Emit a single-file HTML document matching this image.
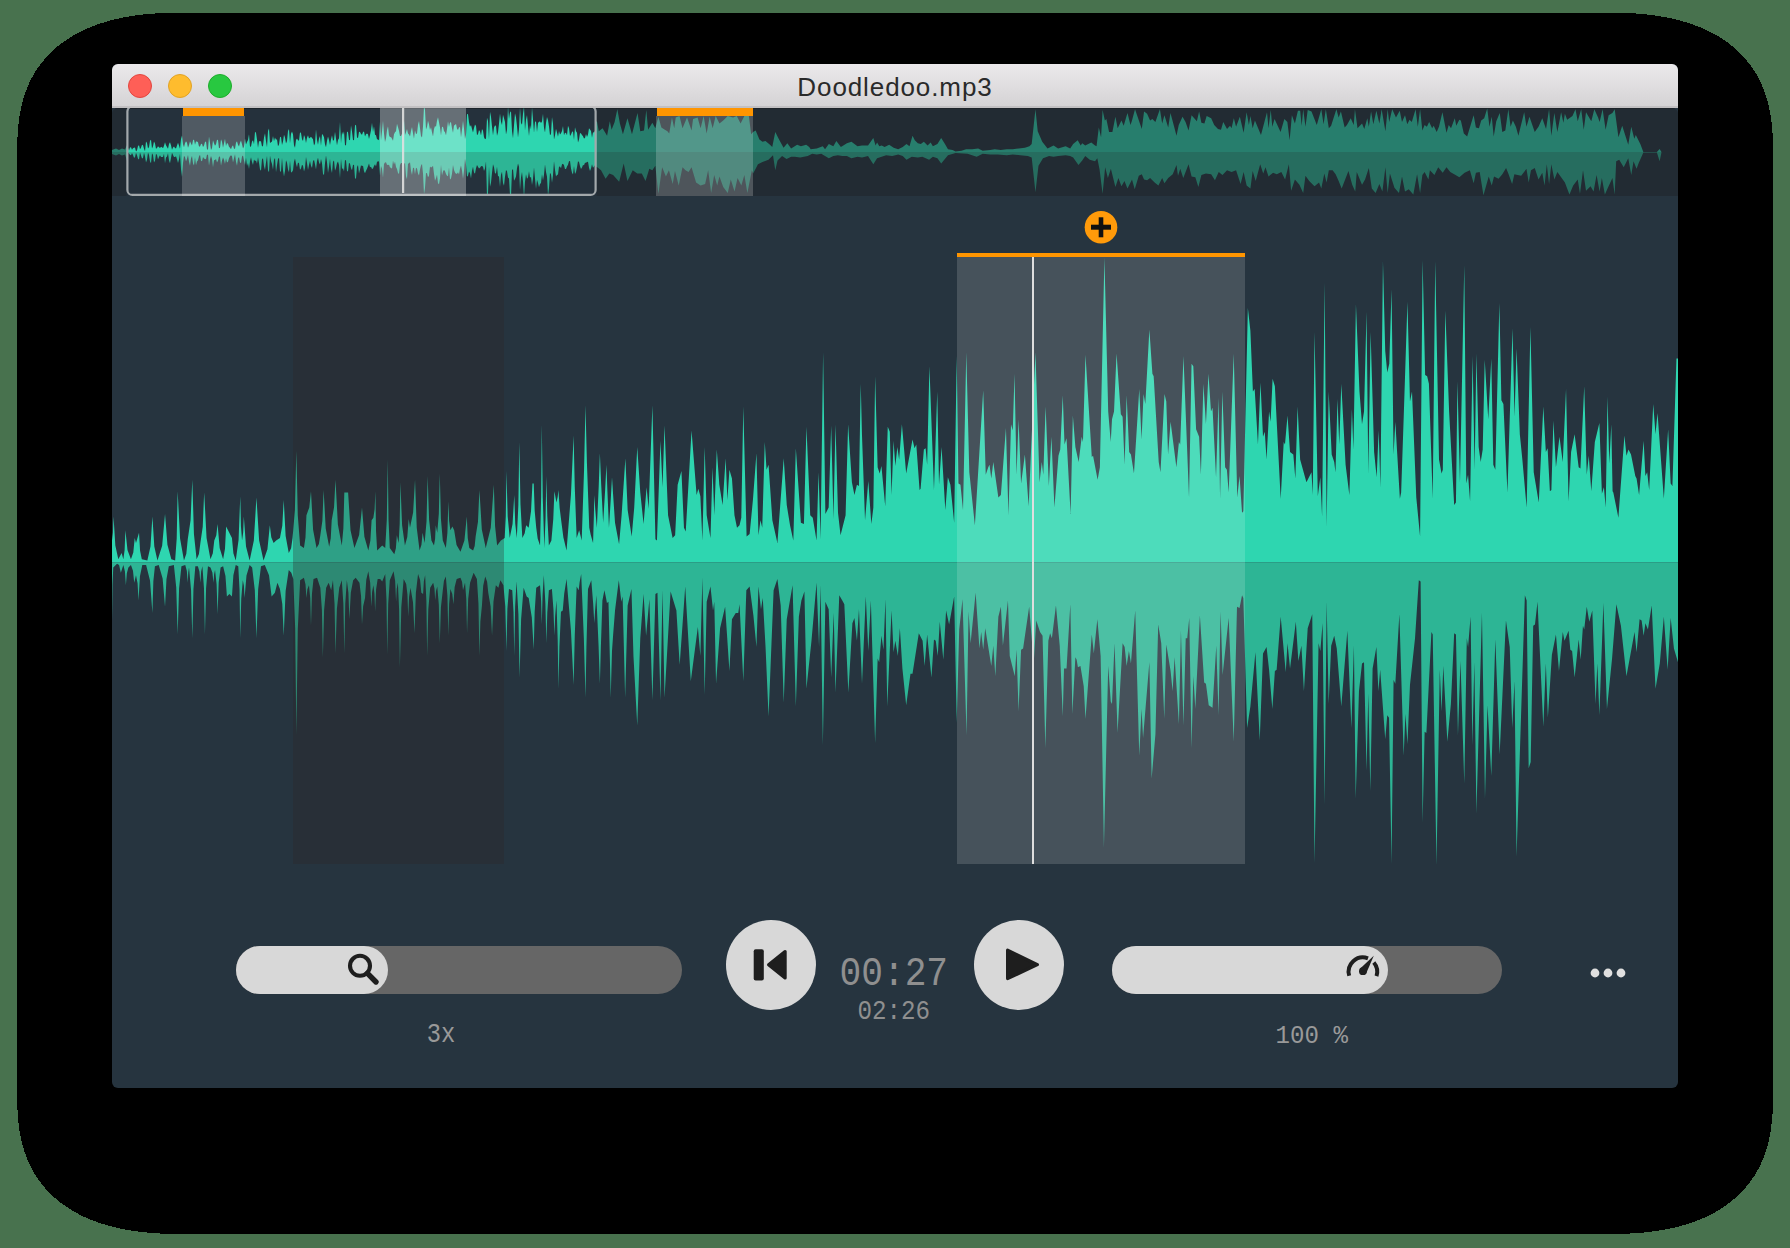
<!DOCTYPE html>
<html><head><meta charset="utf-8">
<style>
html,body{margin:0;padding:0;}
body{width:1790px;height:1248px;overflow:hidden;background:#48724e;position:relative;font-family:"Liberation Sans",sans-serif;}
.shadow{position:absolute;left:17px;top:13px;width:1756px;height:1221px;background:#000;border-radius:175px/108px;}
.win{position:absolute;left:112px;top:64px;width:1566px;height:1024px;border-radius:6px;overflow:hidden;background:#26343f;}
.title{position:absolute;left:0;top:0;width:1566px;height:44px;background:linear-gradient(#ebe9eb,#d4d2d4);box-shadow:inset 0 -2px 0 #c2c0c2;}
.title .t{position:absolute;left:0;width:100%;top:8px;text-align:center;font-size:26px;letter-spacing:0.9px;color:#2a2a2a;}
.tl{position:absolute;top:10px;width:24px;height:24px;border-radius:50%;box-sizing:border-box;}
svg{position:absolute;left:0;top:0;}
.mono{font-family:"Liberation Mono",monospace;position:absolute;white-space:pre;}
</style></head><body>
<svg width="1790" height="1248" viewBox="0 0 1790 1248" style="position:absolute;left:0;top:0"><path d="M17.2,154.0 L17.2,145.6 L17.4,139.6 L17.6,134.3 L17.9,129.4 L18.4,124.8 L18.9,120.4 L19.5,116.2 L20.2,112.1 L21.0,108.2 L21.8,104.4 L22.8,100.7 L23.9,97.1 L25.0,93.6 L26.3,90.1 L27.6,86.8 L29.0,83.5 L30.5,80.4 L32.1,77.3 L33.8,74.3 L35.6,71.3 L37.5,68.5 L39.5,65.7 L41.5,62.9 L43.7,60.3 L45.9,57.7 L48.2,55.2 L50.6,52.7 L53.1,50.4 L55.7,48.1 L58.3,45.8 L61.1,43.7 L63.9,41.6 L66.9,39.6 L69.9,37.6 L73.0,35.7 L76.2,33.9 L79.4,32.2 L82.8,30.5 L86.2,28.9 L89.8,27.4 L93.4,26.0 L97.1,24.6 L101.0,23.3 L104.9,22.1 L108.9,20.9 L113.0,19.8 L117.2,18.8 L121.5,17.9 L126.0,17.0 L130.6,16.3 L135.3,15.5 L140.1,14.9 L145.1,14.3 L150.4,13.9 L155.8,13.4 L161.5,13.1 L167.5,12.8 L174.1,12.7 L181.4,12.5 L191.8,12.5 L1598.4,12.5 L1608.8,12.5 L1616.1,12.7 L1622.7,12.8 L1628.7,13.1 L1634.4,13.4 L1639.8,13.9 L1645.1,14.3 L1650.1,14.9 L1654.9,15.5 L1659.6,16.3 L1664.2,17.0 L1668.7,17.9 L1673.0,18.8 L1677.2,19.8 L1681.3,20.9 L1685.3,22.1 L1689.2,23.3 L1693.1,24.6 L1696.8,26.0 L1700.4,27.4 L1704.0,28.9 L1707.4,30.5 L1710.8,32.2 L1714.0,33.9 L1717.2,35.7 L1720.3,37.6 L1723.3,39.6 L1726.3,41.6 L1729.1,43.7 L1731.9,45.8 L1734.5,48.1 L1737.1,50.4 L1739.6,52.7 L1742.0,55.2 L1744.3,57.7 L1746.5,60.3 L1748.7,62.9 L1750.7,65.7 L1752.7,68.5 L1754.6,71.3 L1756.4,74.3 L1758.1,77.3 L1759.7,80.4 L1761.2,83.5 L1762.6,86.8 L1763.9,90.1 L1765.2,93.6 L1766.3,97.1 L1767.4,100.7 L1768.4,104.4 L1769.2,108.2 L1770.0,112.1 L1770.7,116.2 L1771.3,120.4 L1771.8,124.8 L1772.3,129.4 L1772.6,134.3 L1772.8,139.6 L1773.0,145.6 L1773.0,154.0 L1773.0,1092.7 L1773.0,1101.1 L1772.8,1107.1 L1772.6,1112.4 L1772.3,1117.3 L1771.8,1121.9 L1771.3,1126.3 L1770.7,1130.5 L1770.0,1134.6 L1769.2,1138.5 L1768.4,1142.3 L1767.4,1146.0 L1766.3,1149.6 L1765.2,1153.1 L1763.9,1156.6 L1762.6,1159.9 L1761.2,1163.2 L1759.7,1166.3 L1758.1,1169.4 L1756.4,1172.4 L1754.6,1175.4 L1752.7,1178.2 L1750.7,1181.0 L1748.7,1183.8 L1746.5,1186.4 L1744.3,1189.0 L1742.0,1191.5 L1739.6,1194.0 L1737.1,1196.3 L1734.5,1198.6 L1731.9,1200.9 L1729.1,1203.0 L1726.3,1205.1 L1723.3,1207.1 L1720.3,1209.1 L1717.2,1211.0 L1714.0,1212.8 L1710.8,1214.5 L1707.4,1216.2 L1704.0,1217.8 L1700.4,1219.3 L1696.8,1220.7 L1693.1,1222.1 L1689.2,1223.4 L1685.3,1224.6 L1681.3,1225.8 L1677.2,1226.9 L1673.0,1227.9 L1668.7,1228.8 L1664.2,1229.7 L1659.6,1230.4 L1654.9,1231.2 L1650.1,1231.8 L1645.1,1232.4 L1639.8,1232.8 L1634.4,1233.3 L1628.7,1233.6 L1622.7,1233.9 L1616.1,1234.0 L1608.8,1234.2 L1598.4,1234.2 L191.8,1234.2 L181.4,1234.2 L174.1,1234.0 L167.5,1233.9 L161.5,1233.6 L155.8,1233.3 L150.4,1232.8 L145.1,1232.4 L140.1,1231.8 L135.3,1231.2 L130.6,1230.4 L126.0,1229.7 L121.5,1228.8 L117.2,1227.9 L113.0,1226.9 L108.9,1225.8 L104.9,1224.6 L101.0,1223.4 L97.1,1222.1 L93.4,1220.7 L89.8,1219.3 L86.2,1217.8 L82.8,1216.2 L79.4,1214.5 L76.2,1212.8 L73.0,1211.0 L69.9,1209.1 L66.9,1207.1 L63.9,1205.1 L61.1,1203.0 L58.3,1200.9 L55.7,1198.6 L53.1,1196.3 L50.6,1194.0 L48.2,1191.5 L45.9,1189.0 L43.7,1186.4 L41.5,1183.8 L39.5,1181.0 L37.5,1178.2 L35.6,1175.4 L33.8,1172.4 L32.1,1169.4 L30.5,1166.3 L29.0,1163.2 L27.6,1159.9 L26.3,1156.6 L25.0,1153.1 L23.9,1149.6 L22.8,1146.0 L21.8,1142.3 L21.0,1138.5 L20.2,1134.6 L19.5,1130.5 L18.9,1126.3 L18.4,1121.9 L17.9,1117.3 L17.6,1112.4 L17.4,1107.1 L17.2,1101.1 L17.2,1092.7 Z" fill="#000" shape-rendering="crispEdges"/></svg>
<div class="win">
  <div class="title">
    <div class="tl" style="left:16px;background:#fe5f57;border:1px solid #e2463f"></div>
    <div class="tl" style="left:56px;background:#febc2e;border:1px solid #e1a325"></div>
    <div class="tl" style="left:96px;background:#28c840;border:1px solid #1dad2b"></div>
    <div class="t">Doodledoo.mp3</div>
  </div>
</div>
<svg width="1790" height="1248" viewBox="0 0 1790 1248">
  <defs><clipPath id="wc"><rect x="112" y="108" width="1566" height="980" rx="6"/></clipPath>
  <clipPath id="oc"><rect x="112" y="108" width="1566" height="88"/></clipPath></defs>
  <g clip-path="url(#wc)">
    <rect x="112" y="108" width="1566" height="88" fill="#25313c"/><rect x="112" y="108" width="1566" height="1" fill="#1c232a"/>
    <g clip-path="url(#oc)">
      <path d="M112.0,152.0 L112.00,150.00 L116.00,148.50 L119.00,150.00 L122.00,148.50 L125.00,149.50 L127.00,145.12 L128.00,147.75 L129.00,150.61 L130.00,147.46 L131.00,147.26 L132.00,149.81 L133.00,148.32 L134.00,147.81 L135.00,147.56 L136.00,151.53 L137.00,150.21 L138.00,145.95 L139.00,145.21 L140.00,149.15 L141.00,147.74 L142.00,144.74 L143.00,145.22 L144.00,148.73 L145.00,151.23 L146.00,141.45 L147.00,143.10 L148.00,148.47 L149.00,147.04 L150.00,140.68 L151.00,139.70 L152.00,148.48 L153.00,146.33 L154.00,141.61 L155.00,143.60 L156.00,148.77 L157.00,147.95 L158.00,146.27 L159.00,147.36 L160.00,148.05 L161.00,146.63 L162.00,147.37 L163.00,148.35 L164.00,145.85 L165.00,142.13 L166.00,145.23 L167.00,147.01 L168.00,148.77 L169.00,143.91 L170.00,142.32 L171.00,145.33 L172.00,149.69 L173.00,147.53 L174.00,146.48 L175.00,147.93 L176.00,148.45 L177.00,145.58 L178.00,142.68 L179.00,145.43 L180.00,148.79 L181.00,139.01 L182.00,135.56 L183.00,144.26 L184.00,147.23 L185.00,143.27 L186.00,141.31 L187.00,142.85 L188.00,147.83 L189.00,144.99 L190.00,141.32 L191.00,143.62 L192.00,145.57 L193.00,140.37 L194.00,139.62 L195.00,144.69 L196.00,141.49 L197.00,141.49 L198.00,142.33 L199.00,146.62 L200.00,146.56 L201.00,143.96 L202.00,143.76 L203.00,147.08 L204.00,145.62 L205.00,142.05 L206.00,141.56 L207.00,149.51 L208.00,149.45 L209.00,136.60 L210.00,143.08 L211.00,150.01 L212.00,148.03 L213.00,140.22 L214.00,143.34 L215.00,145.69 L216.00,144.27 L217.00,139.64 L218.00,140.11 L219.00,148.27 L220.00,147.64 L221.00,139.26 L222.00,141.81 L223.00,147.68 L224.00,143.15 L225.00,138.75 L226.00,146.01 L227.00,143.11 L228.00,143.65 L229.00,146.63 L230.00,147.72 L231.00,149.33 L232.00,146.60 L233.00,145.13 L234.00,148.75 L235.00,148.64 L236.00,142.82 L237.00,141.21 L238.00,144.66 L239.00,146.58 L240.00,142.78 L241.00,140.43 L242.00,144.32 L243.00,148.60 L244.00,146.47 L245.00,138.44 L246.00,144.55 L247.00,141.90 L248.00,140.03 L249.00,134.33 L250.00,146.63 L251.00,146.43 L252.00,141.40 L253.00,140.16 L254.00,144.19 L255.00,131.75 L256.00,132.75 L257.00,139.53 L258.00,147.82 L259.00,141.36 L260.00,141.31 L261.00,141.17 L262.00,146.45 L263.00,146.05 L264.00,137.51 L265.00,133.25 L266.00,141.24 L267.00,147.22 L268.00,131.01 L269.00,128.49 L270.00,143.04 L271.00,142.21 L272.00,141.62 L273.00,136.00 L274.00,141.16 L275.00,137.53 L276.00,139.84 L277.00,139.22 L278.00,146.21 L279.00,144.55 L280.00,137.24 L281.00,136.68 L282.00,144.97 L283.00,141.43 L284.00,134.68 L285.00,137.48 L286.00,143.62 L287.00,140.90 L288.00,131.10 L289.00,129.05 L290.00,143.18 L291.00,133.78 L292.00,131.57 L293.00,134.21 L294.00,145.23 L295.00,147.85 L296.00,140.03 L297.00,138.38 L298.00,140.14 L299.00,140.81 L300.00,132.33 L301.00,133.08 L302.00,139.29 L303.00,141.00 L304.00,135.04 L305.00,137.57 L306.00,142.98 L307.00,137.73 L308.00,135.24 L309.00,138.62 L310.00,137.85 L311.00,136.69 L312.00,138.12 L313.00,139.30 L314.00,145.48 L315.00,143.57 L316.00,129.13 L317.00,140.12 L318.00,144.82 L319.00,138.48 L320.00,135.96 L321.00,145.67 L322.00,134.05 L323.00,135.03 L324.00,137.35 L325.00,144.33 L326.00,147.36 L327.00,140.83 L328.00,136.45 L329.00,139.92 L330.00,145.00 L331.00,139.45 L332.00,135.22 L333.00,140.75 L334.00,139.98 L335.00,131.83 L336.00,138.83 L337.00,145.13 L338.00,140.06 L339.00,138.35 L340.00,121.70 L341.00,143.28 L342.00,131.81 L343.00,134.67 L344.00,131.34 L345.00,145.18 L346.00,145.25 L347.00,131.58 L348.00,132.16 L349.00,139.63 L350.00,140.36 L351.00,125.28 L352.00,131.43 L353.00,139.90 L354.00,140.18 L355.00,125.53 L356.00,124.71 L357.00,137.60 L358.00,138.00 L359.00,131.68 L360.00,131.92 L361.00,133.99 L362.00,134.82 L363.00,132.02 L364.00,131.44 L365.00,136.60 L366.00,134.35 L367.00,133.54 L368.00,134.31 L369.00,138.88 L370.00,134.95 L371.00,130.18 L372.00,122.86 L373.00,132.05 L374.00,126.35 L375.00,134.77 L376.00,135.18 L377.00,139.28 L378.00,139.50 L379.00,140.31 L380.00,121.61 L381.00,140.17 L382.00,131.59 L383.00,120.78 L384.00,133.57 L385.00,141.93 L386.00,138.21 L387.00,130.31 L388.00,126.34 L389.00,135.13 L390.00,137.33 L391.00,137.02 L392.00,138.71 L393.00,140.65 L394.00,134.19 L395.00,132.14 L396.00,131.27 L397.00,123.81 L398.00,127.25 L399.00,130.77 L400.00,135.95 L401.00,136.06 L402.00,133.65 L403.00,122.90 L404.00,120.54 L405.00,135.02 L406.00,132.37 L407.00,129.00 L408.00,133.53 L409.00,134.40 L410.00,136.41 L411.00,130.96 L412.00,126.93 L413.00,133.37 L414.00,138.77 L415.00,130.20 L416.00,133.95 L417.00,133.40 L418.00,124.65 L419.00,120.88 L420.00,128.17 L421.00,136.01 L422.00,137.53 L423.00,126.49 L424.00,106.72 L425.00,109.77 L426.00,129.44 L427.00,126.85 L428.00,120.81 L429.00,124.26 L430.00,129.94 L431.00,127.25 L432.00,132.32 L433.00,136.57 L434.00,129.00 L435.00,126.01 L436.00,126.87 L437.00,120.86 L438.00,117.33 L439.00,122.25 L440.00,127.46 L441.00,135.51 L442.00,126.79 L443.00,127.02 L444.00,131.05 L445.00,132.25 L446.00,135.29 L447.00,128.97 L448.00,121.17 L449.00,126.90 L450.00,122.53 L451.00,122.21 L452.00,128.30 L453.00,132.83 L454.00,125.41 L455.00,125.08 L456.00,123.77 L457.00,128.80 L458.00,129.96 L459.00,127.59 L460.00,126.94 L461.00,137.16 L462.00,129.80 L463.00,120.86 L464.00,128.49 L465.00,139.06 L466.00,134.69 L467.00,114.03 L468.00,114.37 L469.00,122.16 L470.00,126.78 L471.00,125.06 L472.00,129.09 L473.00,132.42 L474.00,127.97 L475.00,124.52 L476.00,125.93 L477.00,135.36 L478.00,133.92 L479.00,129.94 L480.00,131.56 L481.00,135.60 L482.00,129.06 L483.00,130.64 L484.00,137.30 L485.00,139.19 L486.00,138.53 L487.00,117.78 L488.00,121.00 L489.00,139.31 L490.00,111.80 L491.00,116.81 L492.00,126.60 L493.00,135.19 L494.00,127.50 L495.00,125.39 L496.00,125.79 L497.00,135.67 L498.00,132.30 L499.00,123.53 L500.00,113.49 L501.00,121.81 L502.00,125.04 L503.00,114.67 L504.00,118.24 L505.00,122.09 L506.00,134.52 L507.00,129.78 L508.00,107.07 L509.00,118.90 L510.00,112.45 L511.00,111.22 L512.00,131.11 L513.00,138.30 L514.00,125.33 L515.00,113.16 L516.00,117.60 L517.00,126.34 L518.00,137.45 L519.00,128.91 L520.00,107.62 L521.00,122.98 L522.00,124.77 L523.00,113.63 L524.00,106.97 L525.00,130.52 L526.00,119.73 L527.00,114.88 L528.00,125.88 L529.00,135.97 L530.00,125.09 L531.00,129.59 L532.00,107.57 L533.00,119.19 L534.00,132.73 L535.00,121.95 L536.00,121.31 L537.00,132.10 L538.00,123.12 L539.00,121.66 L540.00,121.54 L541.00,123.04 L542.00,121.58 L543.00,113.85 L544.00,127.69 L545.00,132.61 L546.00,122.99 L547.00,116.89 L548.00,120.13 L549.00,126.58 L550.00,135.28 L551.00,134.08 L552.00,117.11 L553.00,123.75 L554.00,139.39 L555.00,135.14 L556.00,128.81 L557.00,132.49 L558.00,136.68 L559.00,130.93 L560.00,134.40 L561.00,133.18 L562.00,131.11 L563.00,126.09 L564.00,135.31 L565.00,132.87 L566.00,132.93 L567.00,135.24 L568.00,125.73 L569.00,128.35 L570.00,136.02 L571.00,134.60 L572.00,131.93 L573.00,131.15 L574.00,140.00 L575.00,127.32 L576.00,131.21 L577.00,132.75 L578.00,142.55 L579.00,139.45 L580.00,133.05 L581.00,133.42 L582.00,135.05 L583.00,136.17 L584.00,138.61 L585.00,138.00 L586.00,133.97 L587.00,137.06 L588.00,134.55 L589.00,128.27 L590.00,129.60 L591.00,131.04 L592.00,137.67 L593.00,132.34 L594.00,132.40 L595.00,130.71 L596.00,121.41 L597.00,121.41 L598.79,131.15 L602.56,128.13 L607.08,135.68 L609.80,121.35 L611.61,129.64 L614.63,122.10 L617.34,109.28 L619.91,123.61 L622.92,134.17 L627.45,118.33 L631.97,134.17 L637.55,113.05 L640.27,131.15 L644.04,130.40 L646.30,110.03 L648.11,129.64 L652.34,122.85 L655.35,128.13 L658.37,116.82 L661.39,127.38 L663.65,128.89 L667.42,131.15 L669.23,133.41 L671.94,117.58 L674.21,128.13 L675.72,117.58 L679.49,116.07 L682.50,128.13 L687.03,117.58 L691.55,130.40 L693.06,119.08 L697.59,117.58 L700.60,128.13 L703.62,116.07 L706.64,133.41 L709.65,116.82 L712.67,128.13 L715.69,116.07 L719.46,123.61 L723.23,120.59 L727.75,116.07 L733.03,117.58 L736.80,116.07 L740.58,123.61 L744.35,116.07 L748.87,116.07 L751.13,134.17 L753.09,131.91 L755.66,130.40 L759.43,139.45 L762.45,141.71 L765.46,140.96 L769.99,144.73 L772.25,146.99 L775.27,131.91 L779.04,139.45 L783.56,147.74 L787.34,143.22 L791.11,148.50 L797.14,144.73 L800.91,146.23 L806.19,144.73 L809.21,146.99 L810.72,149.25 L816.75,148.50 L822.78,146.23 L825.04,149.25 L828.82,143.97 L833.34,146.23 L836.36,140.96 L840.88,146.99 L846.92,143.22 L851.44,141.71 L857.47,146.23 L862.00,145.48 L868.03,145.48 L873.31,137.94 L875.58,145.48 L877.08,142.46 L879.35,146.23 L881.61,145.48 L884.63,146.99 L889.15,144.73 L893.68,147.74 L898.20,149.25 L902.73,146.99 L906.50,143.97 L909.51,146.23 L912.53,135.68 L914.79,140.20 L917.81,143.22 L920.83,143.97 L923.84,141.71 L927.61,145.48 L930.63,142.46 L932.89,146.23 L937.42,143.97 L941.19,137.94 L944.96,143.97 L947.98,149.25 L952.50,150.01 L955.52,151.51 L961.55,150.76 L966.08,149.25 L972.11,149.25 L978.15,148.50 L982.67,150.76 L990.21,150.01 L994.74,149.25 L1000.77,150.01 L1006.80,149.25 L1012.84,149.25 L1018.87,148.50 L1024.91,147.74 L1029.43,146.23 L1031.69,143.97 L1035.46,109.28 L1037.73,131.15 L1042.25,141.71 L1047.53,148.50 L1053.56,145.48 L1058.09,148.50 L1065.63,146.23 L1070.16,148.50 L1073.17,143.97 L1077.70,140.20 L1080.72,145.48 L1082.22,143.22 L1085.24,145.48 L1091.27,142.46 L1095.04,145.48 L1096.55,146.23 L1098.82,127.38 L1101.08,137.18 L1102.59,110.03 L1104.85,120.59 L1106.36,119.08 L1109.07,131.91 L1112.39,131.91 L1115.41,116.82 L1117.67,128.13 L1121.44,120.59 L1123.70,125.87 L1127.47,113.05 L1130.49,125.12 L1132.00,120.59 L1135.02,109.28 L1141.80,128.89 L1144.07,111.54 L1147.08,113.80 L1150.10,120.59 L1152.36,119.08 L1155.38,122.10 L1159.91,109.28 L1162.17,123.61 L1164.43,115.31 L1168.20,127.38 L1170.46,113.05 L1173.48,124.36 L1176.50,135.68 L1178.76,125.12 L1182.53,116.82 L1185.55,122.10 L1188.56,130.40 L1191.58,115.31 L1196.86,121.35 L1199.12,111.54 L1201.39,122.85 L1204.40,123.61 L1206.66,116.07 L1211.19,118.33 L1214.21,125.12 L1217.98,128.89 L1220.99,129.64 L1223.26,122.10 L1227.03,128.89 L1230.04,125.87 L1231.55,128.13 L1233.82,118.33 L1236.08,126.63 L1239.85,116.82 L1243.62,132.66 L1246.64,112.30 L1248.90,125.12 L1250.41,116.07 L1252.67,128.13 L1254.93,120.59 L1260.97,134.92 L1267.00,112.30 L1268.51,128.13 L1270.77,110.03 L1272.28,126.63 L1274.54,119.08 L1280.58,131.91 L1284.35,119.08 L1287.36,122.10 L1289.63,140.20 L1291.89,115.31 L1294.91,123.61 L1297.92,110.79 L1300.18,110.79 L1301.69,125.87 L1303.20,109.28 L1305.46,126.63 L1307.73,110.03 L1311.50,111.54 L1316.78,125.12 L1321.30,109.28 L1323.56,124.36 L1325.83,109.28 L1328.84,128.13 L1331.11,125.87 L1336.39,109.28 L1338.65,117.58 L1340.91,111.54 L1344.68,127.38 L1346.94,125.12 L1350.72,118.33 L1353.73,125.12 L1354.94,109.28 L1357.50,128.13 L1362.03,123.61 L1364.29,128.89 L1367.31,118.33 L1368.82,126.63 L1371.08,111.54 L1373.34,124.36 L1376.36,110.79 L1379.37,123.61 L1381.64,109.28 L1385.41,131.15 L1387.67,109.28 L1389.18,122.10 L1392.20,109.28 L1395.97,117.58 L1399.74,110.79 L1402.00,122.10 L1405.02,115.31 L1407.28,124.36 L1409.54,119.84 L1411.80,122.10 L1415.58,109.28 L1417.84,126.63 L1420.10,109.28 L1422.36,130.40 L1424.63,125.12 L1426.89,126.63 L1429.15,122.10 L1432.17,128.13 L1433.68,125.87 L1436.69,131.91 L1438.96,126.63 L1442.42,112.30 L1446.50,132.66 L1448.76,125.12 L1451.02,128.13 L1454.79,118.33 L1456.30,125.87 L1459.32,119.84 L1460.83,120.59 L1463.84,133.41 L1467.16,136.43 L1473.65,115.31 L1475.91,127.38 L1478.93,128.13 L1481.19,120.59 L1484.21,118.33 L1487.22,108.53 L1489.49,126.63 L1491.75,116.82 L1493.71,136.43 L1496.27,121.35 L1499.74,113.05 L1502.31,131.91 L1505.32,130.40 L1508.34,109.28 L1510.60,126.63 L1512.87,120.59 L1515.88,126.63 L1518.45,135.68 L1520.41,127.38 L1524.18,112.30 L1526.44,126.63 L1529.46,116.82 L1534.74,131.91 L1538.51,126.63 L1542.28,118.33 L1546.05,128.89 L1549.07,109.28 L1551.33,135.68 L1554.35,113.05 L1557.36,131.91 L1561.13,112.30 L1563.40,122.85 L1564.91,113.80 L1567.17,119.84 L1572.45,116.07 L1575.46,109.28 L1577.73,121.35 L1581.20,109.28 L1583.76,129.64 L1586.02,112.30 L1591.30,121.35 L1594.32,109.28 L1598.09,117.58 L1599.60,122.10 L1602.61,109.28 L1605.63,129.64 L1608.65,115.31 L1612.42,113.05 L1614.68,109.28 L1618.45,137.18 L1622.22,125.87 L1628.26,144.73 L1631.27,126.63 L1634.29,138.69 L1635.80,134.92 L1640.32,143.97 L1643.34,151.97 L1656.92,151.97 L1659.63,148.95 L1661.44,151.97 L1661.4,152.0 Z" fill="#2ed6b0"/>
      <path d="M112.0,152.0 L112.00,154.00 L116.00,155.50 L119.00,154.00 L122.00,155.50 L125.00,154.50 L127.00,160.72 L128.00,152.43 L129.00,153.46 L130.00,154.65 L131.00,155.30 L132.00,153.04 L133.00,155.02 L134.00,157.66 L135.00,157.36 L136.00,152.81 L137.00,155.13 L138.00,158.83 L139.00,159.40 L140.00,152.54 L141.00,155.39 L142.00,158.60 L143.00,157.88 L144.00,152.68 L145.00,156.18 L146.00,162.55 L147.00,159.85 L148.00,152.54 L149.00,155.03 L150.00,161.58 L151.00,163.20 L152.00,153.20 L153.00,154.90 L154.00,162.56 L155.00,160.87 L156.00,153.71 L157.00,155.02 L158.00,159.62 L159.00,157.01 L160.00,155.14 L161.00,157.10 L162.00,157.09 L163.00,157.05 L164.00,153.84 L165.00,163.19 L166.00,157.44 L167.00,156.41 L168.00,153.24 L169.00,160.42 L170.00,163.24 L171.00,157.89 L172.00,152.71 L173.00,154.97 L174.00,157.09 L175.00,157.05 L176.00,156.18 L177.00,159.35 L178.00,162.92 L179.00,159.51 L180.00,153.73 L181.00,169.36 L182.00,177.04 L183.00,163.08 L184.00,155.87 L185.00,157.27 L186.00,161.45 L187.00,158.67 L188.00,154.95 L189.00,161.64 L190.00,165.76 L191.00,158.62 L192.00,156.12 L193.00,163.53 L194.00,165.60 L195.00,157.15 L196.00,165.32 L197.00,161.61 L198.00,160.33 L199.00,156.46 L200.00,154.84 L201.00,160.67 L202.00,161.28 L203.00,157.04 L204.00,158.47 L205.00,159.09 L206.00,159.16 L207.00,154.76 L208.00,154.83 L209.00,165.81 L210.00,159.20 L211.00,155.91 L212.00,159.06 L213.00,167.30 L214.00,160.30 L215.00,160.08 L216.00,159.12 L217.00,162.57 L218.00,160.79 L219.00,156.59 L220.00,156.73 L221.00,165.69 L222.00,160.62 L223.00,157.38 L224.00,159.81 L225.00,164.03 L226.00,158.29 L227.00,162.59 L228.00,161.65 L229.00,158.15 L230.00,156.14 L231.00,155.23 L232.00,156.16 L233.00,162.42 L234.00,158.36 L235.00,154.21 L236.00,161.79 L237.00,165.79 L238.00,158.38 L239.00,156.95 L240.00,162.48 L241.00,162.90 L242.00,156.59 L243.00,155.57 L244.00,160.57 L245.00,165.06 L246.00,157.71 L247.00,165.91 L248.00,162.94 L249.00,168.88 L250.00,161.17 L251.00,157.27 L252.00,162.05 L253.00,164.95 L254.00,159.44 L255.00,161.12 L256.00,160.55 L257.00,163.75 L258.00,157.33 L259.00,162.79 L260.00,169.53 L261.00,170.78 L262.00,159.28 L263.00,158.30 L264.00,166.18 L265.00,170.11 L266.00,162.41 L267.00,156.12 L268.00,170.17 L269.00,172.17 L270.00,155.78 L271.00,160.94 L272.00,164.08 L273.00,169.70 L274.00,159.69 L275.00,158.06 L276.00,172.20 L277.00,165.26 L278.00,158.94 L279.00,157.78 L280.00,171.48 L281.00,171.62 L282.00,157.89 L283.00,170.24 L284.00,176.43 L285.00,171.06 L286.00,160.29 L287.00,162.76 L288.00,169.38 L289.00,172.14 L290.00,160.78 L291.00,172.52 L292.00,172.07 L293.00,170.37 L294.00,161.84 L295.00,158.52 L296.00,163.81 L297.00,167.19 L298.00,162.43 L299.00,163.32 L300.00,169.71 L301.00,168.41 L302.00,164.67 L303.00,165.79 L304.00,171.38 L305.00,167.91 L306.00,157.05 L307.00,162.94 L308.00,169.90 L309.00,165.11 L310.00,160.79 L311.00,165.65 L312.00,168.06 L313.00,161.14 L314.00,159.70 L315.00,164.28 L316.00,169.61 L317.00,161.09 L318.00,157.76 L319.00,162.44 L320.00,164.44 L321.00,159.00 L322.00,163.27 L323.00,174.02 L324.00,174.88 L325.00,163.17 L326.00,155.49 L327.00,162.36 L328.00,172.89 L329.00,166.70 L330.00,158.98 L331.00,168.95 L332.00,173.11 L333.00,161.78 L334.00,160.52 L335.00,170.86 L336.00,168.01 L337.00,163.31 L338.00,161.55 L339.00,165.09 L340.00,178.32 L341.00,159.02 L342.00,169.02 L343.00,168.24 L344.00,171.45 L345.00,159.90 L346.00,160.47 L347.00,171.14 L348.00,171.16 L349.00,162.78 L350.00,163.63 L351.00,168.34 L352.00,170.19 L353.00,165.06 L354.00,164.70 L355.00,178.43 L356.00,178.49 L357.00,166.90 L358.00,164.94 L359.00,173.57 L360.00,169.41 L361.00,165.27 L362.00,165.92 L363.00,165.74 L364.00,171.31 L365.00,173.34 L366.00,170.86 L367.00,168.67 L368.00,166.28 L369.00,163.41 L370.00,167.30 L371.00,166.83 L372.00,169.11 L373.00,168.55 L374.00,166.01 L375.00,164.14 L376.00,166.49 L377.00,162.10 L378.00,161.20 L379.00,161.45 L380.00,175.76 L381.00,166.05 L382.00,168.86 L383.00,177.72 L384.00,163.92 L385.00,162.38 L386.00,162.30 L387.00,164.78 L388.00,165.01 L389.00,164.68 L390.00,167.49 L391.00,167.74 L392.00,168.86 L393.00,160.41 L394.00,164.38 L395.00,161.68 L396.00,167.08 L397.00,169.03 L398.00,172.90 L399.00,174.05 L400.00,165.01 L401.00,162.93 L402.00,163.00 L403.00,167.07 L404.00,163.88 L405.00,162.75 L406.00,176.30 L407.00,179.34 L408.00,163.66 L409.00,163.30 L410.00,162.14 L411.00,170.71 L412.00,175.08 L413.00,167.91 L414.00,167.77 L415.00,174.32 L416.00,167.72 L417.00,168.52 L418.00,173.44 L419.00,175.46 L420.00,169.43 L421.00,165.54 L422.00,163.93 L423.00,173.59 L424.00,194.29 L425.00,187.94 L426.00,173.07 L427.00,173.22 L428.00,177.33 L429.00,175.72 L430.00,166.40 L431.00,167.43 L432.00,167.04 L433.00,165.65 L434.00,174.12 L435.00,180.86 L436.00,178.16 L437.00,174.84 L438.00,183.27 L439.00,184.21 L440.00,178.52 L441.00,165.09 L442.00,175.40 L443.00,171.47 L444.00,169.66 L445.00,171.16 L446.00,174.10 L447.00,175.85 L448.00,176.23 L449.00,167.61 L450.00,179.45 L451.00,178.60 L452.00,173.77 L453.00,164.98 L454.00,170.06 L455.00,172.57 L456.00,173.68 L457.00,173.78 L458.00,172.33 L459.00,174.62 L460.00,168.66 L461.00,165.49 L462.00,170.75 L463.00,178.70 L464.00,170.98 L465.00,158.82 L466.00,164.71 L467.00,176.67 L468.00,175.69 L469.00,171.39 L470.00,173.37 L471.00,178.62 L472.00,170.66 L473.00,166.66 L474.00,172.45 L475.00,173.79 L476.00,168.28 L477.00,164.95 L478.00,166.85 L479.00,168.45 L480.00,167.87 L481.00,166.14 L482.00,165.93 L483.00,166.67 L484.00,171.12 L485.00,168.62 L486.00,161.60 L487.00,196.66 L488.00,193.21 L489.00,166.70 L490.00,186.66 L491.00,182.73 L492.00,172.93 L493.00,164.35 L494.00,167.28 L495.00,173.51 L496.00,173.21 L497.00,166.64 L498.00,176.29 L499.00,176.30 L500.00,187.11 L501.00,174.85 L502.00,171.67 L503.00,182.96 L504.00,185.68 L505.00,176.85 L506.00,169.96 L507.00,171.17 L508.00,177.52 L509.00,178.49 L510.00,194.70 L511.00,196.87 L512.00,170.16 L513.00,169.04 L514.00,180.69 L515.00,179.12 L516.00,176.47 L517.00,168.27 L518.00,163.41 L519.00,166.74 L520.00,190.05 L521.00,177.56 L522.00,172.00 L523.00,181.49 L524.00,197.41 L525.00,181.76 L526.00,174.19 L527.00,178.66 L528.00,177.46 L529.00,171.24 L530.00,177.77 L531.00,176.67 L532.00,185.04 L533.00,178.87 L534.00,167.41 L535.00,178.56 L536.00,189.12 L537.00,179.63 L538.00,183.01 L539.00,187.31 L540.00,183.89 L541.00,182.96 L542.00,174.26 L543.00,180.40 L544.00,174.83 L545.00,164.50 L546.00,172.00 L547.00,176.80 L548.00,195.54 L549.00,188.11 L550.00,172.82 L551.00,174.56 L552.00,182.84 L553.00,175.34 L554.00,161.31 L555.00,169.96 L556.00,176.42 L557.00,174.97 L558.00,174.38 L559.00,166.76 L560.00,166.53 L561.00,168.24 L562.00,164.37 L563.00,163.66 L564.00,165.17 L565.00,169.04 L566.00,169.06 L567.00,166.45 L568.00,164.76 L569.00,161.33 L570.00,160.88 L571.00,168.58 L572.00,172.85 L573.00,174.44 L574.00,166.05 L575.00,173.90 L576.00,172.05 L577.00,167.24 L578.00,161.31 L579.00,161.94 L580.00,166.37 L581.00,169.02 L582.00,167.58 L583.00,164.92 L584.00,165.35 L585.00,162.71 L586.00,162.87 L587.00,161.97 L588.00,161.74 L589.00,167.63 L590.00,170.93 L591.00,168.52 L592.00,164.20 L593.00,167.84 L594.00,166.50 L595.00,165.17 L596.00,166.83 L597.00,166.96 L601.05,170.37 L605.58,178.66 L609.35,173.39 L613.12,174.89 L619.15,181.68 L623.68,163.58 L627.45,180.93 L632.73,170.37 L637.25,173.39 L641.78,173.39 L645.55,180.93 L649.32,168.86 L652.34,170.37 L655.35,165.84 L658.37,193.75 L662.14,167.35 L665.91,176.40 L668.93,170.37 L672.70,183.94 L674.96,171.12 L678.73,185.45 L682.50,167.35 L685.52,170.37 L688.54,171.88 L691.55,167.35 L696.08,182.44 L700.60,185.45 L705.13,183.94 L708.15,170.37 L711.16,192.99 L714.18,174.89 L717.20,185.45 L719.46,176.40 L723.23,186.96 L727.75,192.99 L730.77,179.42 L734.54,191.49 L737.56,177.91 L741.33,185.45 L744.35,174.89 L747.36,192.99 L751.89,170.37 L753.09,173.39 L755.66,168.86 L757.92,164.34 L762.45,162.07 L768.48,159.81 L773.01,155.28 L775.27,170.37 L777.53,160.56 L782.06,156.04 L786.58,159.06 L791.11,156.79 L794.88,156.79 L800.16,157.55 L807.70,156.04 L812.22,153.78 L816.75,154.53 L821.27,153.78 L825.04,156.04 L828.82,158.30 L833.34,156.04 L837.87,155.28 L842.39,156.04 L846.92,156.04 L851.44,158.30 L857.47,156.79 L862.00,157.55 L868.03,156.04 L873.31,164.34 L877.08,158.30 L881.61,156.79 L886.13,155.28 L892.17,156.04 L898.20,154.53 L902.73,156.04 L906.50,159.81 L911.78,156.79 L917.81,157.55 L922.34,156.79 L929.12,159.81 L932.89,156.79 L937.42,158.30 L941.19,163.58 L947.98,155.28 L955.52,153.02 L967.59,153.78 L976.64,156.79 L982.67,153.78 L990.21,154.53 L997.75,154.53 L1006.80,155.28 L1012.84,154.53 L1020.38,155.28 L1027.92,156.04 L1031.69,157.55 L1035.46,192.24 L1038.48,165.84 L1043.01,158.30 L1049.04,156.04 L1053.56,156.79 L1058.09,156.04 L1065.63,155.28 L1070.16,156.04 L1073.17,157.55 L1078.45,165.09 L1082.22,160.56 L1085.24,156.04 L1089.77,159.81 L1095.04,161.32 L1097.31,158.30 L1099.57,169.61 L1102.59,193.75 L1105.15,167.35 L1107.87,177.91 L1110.88,168.86 L1115.41,186.96 L1118.42,177.91 L1121.44,186.21 L1124.46,180.93 L1127.47,188.47 L1132.00,179.42 L1134.72,189.22 L1138.79,175.65 L1141.80,174.14 L1144.07,179.42 L1147.08,180.17 L1150.10,177.91 L1154.63,182.44 L1158.40,185.45 L1162.17,177.91 L1164.43,183.19 L1168.20,177.91 L1172.73,174.14 L1176.50,165.09 L1178.01,175.65 L1180.27,168.86 L1183.28,177.91 L1188.56,164.34 L1191.58,176.40 L1195.35,177.16 L1198.37,186.96 L1201.39,174.89 L1205.91,173.39 L1211.19,174.14 L1214.96,180.17 L1218.73,171.88 L1222.50,174.89 L1227.03,170.37 L1231.55,171.88 L1236.08,170.37 L1240.60,183.94 L1243.62,171.88 L1246.64,185.45 L1250.41,188.47 L1252.67,171.12 L1255.69,180.93 L1260.21,164.34 L1263.23,173.39 L1265.49,167.35 L1268.51,176.40 L1273.03,172.63 L1276.80,174.14 L1281.33,171.88 L1285.10,179.42 L1288.87,164.34 L1291.13,190.73 L1294.91,179.42 L1299.43,184.70 L1303.20,192.99 L1305.46,175.65 L1309.23,180.93 L1314.51,186.21 L1319.04,182.44 L1321.30,188.47 L1324.32,173.39 L1326.58,182.44 L1328.84,170.37 L1332.61,170.37 L1335.63,174.14 L1338.65,180.93 L1341.66,188.47 L1348.45,171.12 L1352.22,184.70 L1355.24,191.49 L1356.75,171.88 L1362.03,184.70 L1365.04,179.42 L1368.82,168.11 L1371.83,188.47 L1375.60,192.99 L1379.37,183.94 L1382.39,191.49 L1385.41,167.35 L1387.67,192.99 L1389.93,173.39 L1394.46,187.72 L1398.98,192.99 L1402.00,176.40 L1405.02,191.49 L1408.79,189.22 L1413.31,194.50 L1417.08,174.14 L1420.10,192.99 L1422.36,174.89 L1424.63,171.88 L1428.40,179.42 L1429.91,170.37 L1434.43,174.89 L1438.20,167.35 L1442.73,172.63 L1446.50,167.35 L1450.27,171.88 L1455.55,174.89 L1459.32,177.16 L1464.60,172.63 L1469.88,170.37 L1473.65,183.19 L1475.91,172.63 L1479.68,171.88 L1483.45,195.26 L1488.73,176.40 L1491.75,185.45 L1494.01,176.40 L1498.54,178.66 L1502.31,174.14 L1506.08,168.11 L1508.34,173.39 L1512.11,183.94 L1514.37,174.14 L1521.16,175.65 L1526.44,168.86 L1528.70,182.44 L1530.97,170.37 L1534.74,168.11 L1538.51,179.42 L1542.28,172.63 L1544.54,185.45 L1546.80,164.34 L1549.07,183.94 L1551.33,164.34 L1554.35,179.42 L1557.36,171.88 L1564.91,182.44 L1569.43,194.50 L1573.20,185.45 L1577.73,179.42 L1579.99,193.75 L1583.01,170.37 L1586.02,190.73 L1590.55,186.21 L1593.56,191.49 L1596.58,174.89 L1599.60,191.49 L1601.86,177.91 L1604.88,194.50 L1607.89,187.72 L1612.42,177.91 L1614.68,194.50 L1616.19,161.32 L1619.21,159.81 L1623.73,167.35 L1628.26,158.30 L1631.27,174.89 L1633.54,161.32 L1636.55,168.86 L1638.82,162.83 L1641.83,156.04 L1643.34,152.57 L1656.92,152.57 L1659.63,161.32 L1661.44,152.57 L1661.4,152.0 Z" fill="#2db595"/>
      <rect x="112" y="108" width="14.4" height="88" fill="#202529" fill-opacity="0.5"/>
      <rect x="596.6" y="108" width="1081.4" height="88" fill="#202529" fill-opacity="0.5"/>
      <rect x="127.4" y="106.5" width="468.2" height="88.4" rx="5" fill="none" stroke="#a3a8ab" stroke-width="2.2"/>
      <rect x="182" y="116" width="63" height="80" fill="#ffffff" fill-opacity="0.2"/>
      <rect x="183" y="108" width="61" height="8" fill="#ff9500"/>
      <rect x="656" y="116" width="97" height="80" fill="#ffffff" fill-opacity="0.2"/>
      <rect x="657" y="108" width="96" height="8" fill="#ff9500"/>
      <rect x="380" y="108" width="86" height="88" fill="#ffffff" fill-opacity="0.3"/>
      <rect x="402" y="108" width="2.2" height="85" fill="#e0e0e0" fill-opacity="0.9"/>
    </g>
    <path d="M112.0,562.5 L112.00,540.40 L112.94,532.73 L113.52,516.41 L115.34,545.61 L118.31,559.34 L121.60,553.03 L123.36,559.34 L124.62,550.05 L125.38,530.30 L127.49,550.05 L130.94,559.34 L133.29,552.47 L134.73,537.88 L135.99,542.93 L139.02,532.83 L140.08,550.86 L141.80,559.34 L147.35,560.61 L150.48,546.46 L152.40,516.41 L154.32,546.46 L157.45,560.61 L162.15,545.66 L165.03,513.89 L167.43,544.80 L171.34,559.34 L175.13,560.61 L176.70,538.38 L177.66,491.16 L180.06,538.38 L183.97,560.61 L186.32,553.74 L187.76,539.14 L190.58,520.15 L192.30,479.80 L193.93,533.89 L196.60,559.34 L198.94,554.09 L200.38,542.93 L202.73,526.77 L204.17,492.42 L206.57,537.93 L210.48,559.34 L212.83,553.28 L214.27,540.40 L216.31,535.15 L217.56,523.99 L219.67,548.03 L223.11,559.34 L224.99,548.84 L226.14,526.52 L231.95,537.88 L233.39,553.33 L235.74,560.61 L238.56,540.00 L240.28,496.21 L240.95,526.26 L242.05,540.40 L243.15,532.73 L243.82,516.41 L246.03,546.46 L249.63,560.61 L253.85,540.40 L256.44,497.47 L259.13,540.40 L263.52,560.61 L267.43,549.29 L269.83,525.25 L271.27,537.27 L273.62,542.93 L276.14,540.40 L279.93,537.88 L282.28,525.76 L283.72,500.00 L285.64,536.06 L288.77,553.03 L291.12,548.18 L292.56,537.88 L294.90,510.00 L296.34,450.76 L297.78,515.15 L300.13,545.45 L303.92,547.98 L305.48,537.47 L306.44,515.15 L309.26,507.47 L310.99,491.16 L313.10,529.80 L316.55,547.98 L318.89,543.94 L320.33,535.35 L322.37,520.81 L323.62,489.90 L325.73,528.54 L329.17,546.72 L330.74,538.23 L331.70,520.20 L334.05,507.27 L335.48,479.80 L337.88,524.44 L341.80,545.45 L343.36,528.48 L344.32,492.42 L348.11,492.42 L350.51,530.20 L354.42,547.98 L359.12,535.05 L362.00,507.58 L364.40,536.77 L368.31,550.51 L370.35,540.81 L371.60,520.20 L373.36,517.68 L374.62,509.19 L375.38,491.16 L376.06,531.52 L377.15,550.51 L382.20,545.45 L385.23,547.98 L386.80,519.70 L387.76,459.60 L388.53,519.70 L389.78,547.98 L394.32,554.29 L395.89,548.23 L396.85,535.35 L398.62,542.93 L399.71,523.54 L400.38,482.32 L402.11,525.25 L404.93,545.45 L407.28,536.97 L408.72,518.94 L409.98,527.78 L413.11,512.42 L415.03,479.80 L416.76,527.88 L419.58,550.51 L421.45,544.85 L422.61,532.83 L424.63,542.93 L426.51,521.52 L427.66,476.01 L429.10,519.80 L431.44,540.40 L433.97,545.45 L435.07,538.99 L435.74,525.25 L437.25,532.83 L438.82,513.84 L439.78,473.48 L440.93,518.99 L442.81,540.40 L445.84,547.98 L447.40,533.03 L448.36,501.26 L449.13,521.01 L450.38,530.30 L452.40,526.52 L454.17,530.30 L456.57,544.90 L460.48,551.77 L464.40,540.45 L466.80,516.41 L467.76,537.88 L469.32,547.98 L473.11,550.51 L474.68,546.06 L475.64,536.62 L477.98,521.67 L479.42,489.90 L481.82,529.39 L485.74,547.98 L490.75,527.78 L493.82,484.85 L495.07,526.06 L497.10,545.45 L500.89,540.40 L504.68,537.88 L505.77,516.46 L506.44,470.96 L507.69,516.46 L509.73,537.88 L512.55,523.91 L514.27,494.95 L515.23,523.49 L516.80,537.88 L518.36,505.06 L519.32,441.92 L520.47,504.34 L522.35,537.88 L524.70,533.35 L526.14,525.25 L528.67,527.78 L531.02,511.16 L532.45,483.59 L533.72,483.59 L534.68,510.63 L536.24,527.78 L537.68,538.44 L540.03,545.45 L541.13,496.45 L541.80,424.24 L542.76,497.23 L544.32,547.98 L545.58,518.01 L546.34,476.01 L547.30,516.11 L548.87,545.45 L551.39,540.40 L553.27,518.88 L554.42,491.16 L556.44,502.53 L557.70,496.85 L558.46,489.90 L559.62,507.75 L561.49,522.73 L563.41,537.52 L566.55,550.51 L570.93,494.91 L573.62,435.61 L574.77,486.98 L576.65,537.88 L579.17,530.30 L581.70,540.40 L584.05,470.06 L585.48,405.30 L586.92,462.74 L589.27,527.78 L590.71,534.73 L593.06,542.93 L593.84,516.62 L594.32,494.95 L595.28,509.61 L596.85,527.78 L598.73,485.99 L599.88,453.28 L601.13,483.17 L603.16,522.73 L605.20,489.12 L606.44,464.65 L607.40,490.75 L608.97,527.78 L610.85,497.78 L612.00,477.27 L613.15,495.35 L615.03,522.73 L616.57,531.06 L619.07,544.19 L621.60,515.15 L625.38,458.33 L627.66,510.10 L631.70,536.62 L634.22,507.58 L637.25,446.97 L640.28,492.42 L643.57,523.99 L646.60,487.37 L648.62,508.84 L652.40,405.30 L655.43,539.14 L656.95,540.40 L660.48,440.66 L662.51,487.37 L664.53,425.51 L668.06,515.15 L672.61,537.88 L675.13,535.35 L677.66,484.85 L681.44,470.96 L683.97,527.78 L685.74,531.57 L691.55,430.56 L696.60,494.95 L698.36,488.64 L700.38,496.21 L702.40,540.40 L704.68,446.97 L706.70,515.15 L710.48,537.88 L712.51,467.17 L714.27,515.15 L716.80,449.49 L719.32,484.85 L722.61,505.05 L725.64,458.33 L727.40,500.00 L729.42,469.70 L731.95,478.54 L734.47,515.15 L737.00,527.78 L739.53,525.25 L741.29,517.68 L743.31,406.57 L746.60,536.62 L749.63,534.09 L752.91,500.00 L756.44,453.28 L758.46,535.35 L760.48,520.20 L762.25,527.78 L764.78,441.92 L766.55,469.70 L768.57,464.65 L772.35,520.20 L777.40,542.93 L783.72,458.33 L786.75,505.05 L790.03,525.25 L793.31,540.40 L795.84,448.23 L800.89,522.73 L803.92,523.99 L806.44,426.77 L810.23,515.15 L812.76,517.68 L816.55,540.40 L818.57,472.22 L820.59,539.14 L823.11,352.27 L825.38,513.89 L828.67,507.58 L831.19,425.51 L833.46,518.94 L835.48,424.24 L838.01,512.63 L840.54,535.35 L845.59,515.15 L848.11,424.24 L851.90,482.32 L854.42,494.95 L856.95,484.85 L858.97,486.11 L860.74,383.84 L862.00,435.61 L865.03,520.20 L868.31,481.06 L871.34,523.99 L873.36,507.58 L875.13,376.26 L877.66,467.17 L879.68,473.48 L881.44,465.91 L885.23,506.31 L887.76,426.77 L889.78,431.82 L891.55,494.95 L893.57,440.66 L895.33,465.91 L897.35,446.97 L899.12,459.60 L901.90,424.24 L906.19,473.48 L912.51,439.39 L914.53,448.23 L916.29,444.44 L919.58,489.90 L920.59,488.64 L923.87,449.49 L925.64,448.23 L927.15,464.65 L929.42,366.16 L933.97,489.90 L937.25,391.41 L939.02,484.85 L941.55,446.97 L945.33,510.10 L947.86,477.27 L950.38,484.85 L954.17,522.73 L956.70,356.06 L958.46,483.59 L960.48,484.85 L963.01,510.10 L966.29,352.27 L969.32,472.22 L974.88,525.25 L983.21,390.15 L985.74,474.75 L988.26,467.17 L989.53,464.65 L991.29,478.54 L993.31,462.12 L998.36,497.47 L1000.89,494.95 L1005.94,428.03 L1008.46,515.15 L1010.99,424.24 L1012.76,430.56 L1014.53,373.74 L1016.55,474.75 L1018.57,419.19 L1021.09,483.59 L1024.88,454.55 L1028.67,506.31 L1031.19,446.97 L1035.48,352.27 L1039.53,482.32 L1041.80,462.12 L1043.31,474.75 L1045.59,406.57 L1048.87,486.11 L1051.39,436.87 L1054.42,507.58 L1058.46,455.81 L1060.23,449.49 L1062.76,395.20 L1064.53,444.44 L1066.55,438.13 L1070.59,513.89 L1072.86,415.40 L1075.38,446.97 L1078.67,462.12 L1081.70,436.87 L1082.96,441.92 L1085.48,354.80 L1091.80,457.07 L1093.06,455.81 L1097.61,479.80 L1099.88,467.17 L1104.42,257.58 L1108.21,411.62 L1110.74,441.92 L1112.00,419.19 L1114.02,411.62 L1116.55,353.54 L1120.84,414.14 L1122.61,416.67 L1124.63,464.65 L1126.65,395.20 L1129.17,452.02 L1130.94,454.55 L1133.97,473.48 L1139.27,388.89 L1141.55,439.39 L1143.57,393.94 L1145.33,404.04 L1149.37,329.55 L1152.40,373.74 L1153.67,376.26 L1158.72,462.12 L1160.48,472.22 L1164.53,393.94 L1166.29,401.52 L1168.06,454.55 L1170.59,421.72 L1176.39,467.17 L1178.92,441.92 L1180.18,444.44 L1183.46,356.06 L1189.02,497.47 L1191.55,363.64 L1193.31,366.16 L1196.09,429.29 L1199.12,436.87 L1200.89,474.75 L1203.41,383.84 L1205.94,424.24 L1208.46,373.74 L1210.99,411.62 L1212.51,407.83 L1216.04,477.27 L1218.57,397.73 L1220.08,498.74 L1222.35,391.41 L1225.13,467.17 L1226.90,469.70 L1228.67,492.42 L1233.72,353.54 L1237.25,497.47 L1239.53,476.01 L1242.05,512.63 L1243.31,511.36 L1247.86,308.08 L1250.38,330.81 L1252.91,391.41 L1254.68,388.89 L1257.96,444.44 L1260.48,382.58 L1263.01,436.87 L1264.78,431.82 L1266.55,459.60 L1269.07,411.62 L1270.59,421.72 L1272.61,378.79 L1274.88,386.36 L1280.69,498.74 L1283.72,441.92 L1284.98,444.44 L1287.51,415.40 L1290.03,452.02 L1293.31,454.55 L1295.33,478.54 L1297.61,406.57 L1300.13,459.60 L1306.44,482.32 L1311.49,472.22 L1312.76,494.95 L1314.53,332.07 L1317.81,496.21 L1320.33,477.27 L1322.10,516.41 L1324.63,282.83 L1326.65,526.52 L1328.67,391.41 L1331.70,454.55 L1334.22,462.12 L1335.48,472.22 L1337.51,398.99 L1339.27,444.44 L1341.29,383.84 L1345.59,464.65 L1349.37,494.95 L1351.90,409.09 L1353.41,449.49 L1355.94,304.29 L1359.47,391.41 L1362.00,424.24 L1364.02,411.62 L1366.55,311.87 L1368.31,473.48 L1370.59,332.07 L1374.12,452.02 L1376.65,477.27 L1378.67,430.56 L1380.43,487.37 L1382.96,261.36 L1385.23,351.01 L1387.25,372.47 L1389.27,363.64 L1391.55,289.14 L1393.57,454.55 L1395.33,421.72 L1399.88,498.74 L1401.14,492.42 L1403.67,417.93 L1407.45,301.77 L1409.98,401.52 L1412.00,391.41 L1416.29,497.47 L1420.08,536.62 L1422.61,260.10 L1425.13,375.00 L1427.15,376.26 L1428.92,383.84 L1432.71,498.74 L1435.23,261.36 L1439.02,459.60 L1441.55,473.48 L1442.81,469.70 L1445.33,310.61 L1449.12,411.62 L1454.17,505.05 L1455.94,502.53 L1457.45,381.31 L1459.98,482.32 L1464.27,265.15 L1466.29,483.59 L1468.06,474.75 L1470.08,501.26 L1472.61,356.06 L1474.63,469.70 L1476.39,353.54 L1478.67,446.97 L1480.69,462.12 L1482.71,449.49 L1484.73,359.85 L1488.26,419.19 L1491.29,358.59 L1493.31,464.65 L1495.33,469.70 L1499.37,303.03 L1501.39,400.25 L1503.41,404.04 L1507.45,492.42 L1512.51,328.28 L1514.53,416.67 L1516.55,348.48 L1519.83,434.34 L1522.35,459.60 L1526.65,507.58 L1530.43,327.02 L1533.72,472.22 L1538.77,502.53 L1543.31,406.57 L1545.84,452.02 L1547.61,448.23 L1549.88,491.16 L1551.39,489.90 L1553.41,420.45 L1555.94,467.17 L1559.47,436.87 L1562.76,462.12 L1566.04,388.89 L1568.57,501.26 L1571.09,452.02 L1574.63,434.34 L1578.67,467.17 L1580.43,468.43 L1584.22,386.36 L1586.75,474.75 L1588.77,455.81 L1591.29,491.16 L1594.83,441.92 L1599.37,422.98 L1601.90,493.69 L1603.92,487.37 L1605.69,507.58 L1607.53,396.46 L1609.29,463.38 L1611.31,424.24 L1612.58,491.16 L1613.33,492.42 L1618.38,517.68 L1624.44,435.61 L1626.46,455.81 L1628.48,449.49 L1631.01,454.55 L1635.30,476.01 L1636.57,478.54 L1639.09,494.95 L1643.64,440.66 L1645.40,476.01 L1647.17,472.22 L1649.19,489.90 L1653.23,404.04 L1655.51,434.34 L1657.53,412.88 L1663.84,498.74 L1668.13,429.29 L1670.66,483.59 L1672.42,486.11 L1676.46,358.59 L1679.49,358.59 L1678.0,562.5 Z" fill="#2ed6b0"/>
    <path d="M112.0,562.5 L112.00,620.61 L112.48,584.55 L113.26,567.58 L117.05,563.79 L119.07,565.05 L120.84,572.63 L123.36,565.05 L124.93,571.52 L125.89,585.25 L126.85,573.23 L128.41,567.58 L130.94,565.05 L132.97,570.71 L134.22,582.73 L135.99,575.15 L137.56,583.23 L138.52,600.40 L139.95,576.36 L142.30,565.05 L146.09,565.05 L150.01,580.40 L152.40,613.03 L153.36,581.26 L154.93,566.31 L158.72,565.05 L162.63,578.38 L165.03,606.72 L166.47,579.24 L168.82,566.31 L173.87,565.05 L176.22,587.27 L177.66,634.49 L179.10,588.13 L181.44,566.31 L185.23,565.05 L186.80,570.71 L187.76,582.73 L188.24,572.42 L189.02,567.58 L191.06,590.20 L192.30,638.28 L193.45,589.34 L195.33,566.31 L197.86,566.31 L199.42,571.57 L200.38,582.73 L201.15,571.57 L202.40,566.31 L203.97,588.13 L204.93,634.49 L206.08,588.13 L207.96,566.31 L210.48,567.58 L212.36,572.42 L213.52,582.73 L214.09,574.14 L215.03,570.10 L216.60,584.24 L217.56,614.29 L218.71,582.53 L220.59,567.58 L223.11,566.31 L225.46,576.01 L226.90,596.62 L229.42,594.09 L231.95,596.62 L233.39,575.15 L235.74,565.05 L238.26,566.31 L239.52,589.34 L240.28,638.28 L241.24,598.79 L242.81,580.20 L243.90,585.86 L244.58,597.88 L246.49,575.56 L249.63,565.05 L252.15,567.58 L254.81,590.20 L256.44,638.28 L258.17,589.34 L260.99,566.31 L264.78,565.05 L269.01,575.15 L271.60,596.62 L274.88,592.83 L277.40,582.73 L279.93,589.04 L282.28,603.99 L283.72,635.76 L285.64,591.11 L288.77,570.10 L291.29,572.63 L293.31,578.94 L295.19,628.64 L296.34,734.24 L297.78,629.49 L300.13,580.20 L303.92,577.68 L305.48,584.14 L306.44,597.88 L307.40,589.29 L308.97,585.25 L310.22,598.18 L310.99,625.66 L311.95,593.89 L313.52,578.94 L317.05,577.68 L320.33,587.78 L321.90,610.00 L322.86,657.22 L324.11,610.00 L326.14,587.78 L328.67,582.73 L331.19,590.30 L332.96,580.20 L334.53,603.64 L335.48,653.43 L336.92,608.79 L339.27,587.78 L341.80,580.20 L343.36,603.64 L344.32,653.43 L345.28,603.64 L346.85,580.20 L348.41,592.73 L349.37,619.34 L350.81,592.73 L353.16,580.20 L355.69,577.68 L359.47,582.73 L361.04,596.06 L362.00,624.39 L363.15,606.36 L365.03,597.88 L366.28,579.85 L368.31,571.36 L370.19,582.68 L371.34,606.72 L372.11,592.12 L373.36,585.25 L374.46,593.74 L375.13,611.77 L376.09,589.44 L377.66,578.94 L380.18,578.94 L382.20,581.46 L385.23,573.89 L386.48,599.75 L387.25,654.70 L388.21,604.04 L389.78,580.20 L393.57,571.36 L395.13,581.06 L396.09,601.67 L396.76,588.79 L397.86,582.73 L399.11,609.80 L399.88,667.32 L401.32,607.22 L403.67,578.94 L406.19,583.99 L407.44,594.49 L408.21,616.82 L409.08,597.07 L410.48,587.78 L412.99,602.32 L414.53,633.23 L415.87,592.88 L418.06,573.89 L420.10,579.95 L421.34,592.83 L423.11,594.09 L423.88,581.21 L425.13,575.15 L426.38,601.01 L427.15,655.96 L428.30,609.60 L430.18,587.78 L433.21,582.73 L434.46,588.38 L435.23,600.40 L436.00,590.96 L437.25,586.52 L438.82,604.70 L439.78,643.33 L440.93,607.27 L442.81,590.30 L443.96,580.86 L445.84,576.41 L447.40,595.40 L448.36,635.76 L449.13,603.99 L450.38,589.04 L452.26,593.89 L453.41,604.19 L454.66,587.02 L456.70,578.94 L460.48,577.68 L462.05,581.72 L463.01,590.30 L465.03,582.73 L466.28,598.89 L467.05,633.23 L468.20,598.89 L470.08,582.73 L473.62,572.63 L476.90,578.94 L478.46,603.59 L479.42,655.96 L480.38,621.62 L481.95,605.45 L483.20,585.71 L485.23,576.41 L487.11,581.67 L488.26,592.83 L490.61,606.57 L492.05,635.76 L493.49,601.41 L495.84,585.25 L498.36,587.78 L500.38,580.20 L503.41,585.25 L505.29,606.26 L506.44,650.91 L507.40,608.84 L508.97,589.04 L512.25,590.30 L513.51,611.90 L514.27,655.96 L515.14,606.40 L516.55,581.46 L518.42,614.28 L519.58,677.42 L521.11,619.30 L523.62,587.78 L526.65,596.62 L528.67,597.88 L531.80,617.44 L533.72,649.65 L534.68,611.79 L536.24,587.78 L540.03,585.25 L541.13,601.08 L541.80,624.39 L542.57,595.32 L543.82,575.15 L545.38,603.49 L546.34,643.33 L547.30,612.71 L548.87,590.30 L551.90,589.04 L553.46,609.49 L554.42,635.76 L555.19,616.10 L556.44,600.40 L557.70,640.13 L558.46,688.79 L559.42,646.86 L560.99,611.77 L562.76,610.51 L564.20,593.75 L566.55,578.94 L570.93,630.26 L573.62,685.00 L574.77,635.52 L576.65,586.52 L578.67,590.30 L579.63,582.27 L581.19,573.89 L583.85,638.23 L585.48,697.63 L586.44,646.52 L588.01,589.04 L591.29,580.20 L593.17,603.63 L594.32,623.13 L595.09,610.71 L596.34,595.35 L598.54,644.88 L599.88,683.74 L600.84,647.78 L602.40,600.40 L604.42,590.30 L605.99,597.64 L606.95,602.93 L608.46,601.67 L609.87,658.44 L610.74,697.63 L611.22,678.77 L612.00,650.91 L613.15,634.84 L615.03,610.51 L616.47,598.74 L618.82,580.20 L621.34,601.67 L622.61,596.62 L625.13,697.63 L627.66,605.45 L631.44,589.04 L633.46,655.96 L637.25,725.40 L640.28,638.28 L643.57,594.09 L646.09,635.76 L649.37,599.14 L652.40,700.15 L655.43,594.09 L657.45,592.83 L660.48,700.15 L662.51,590.30 L664.53,697.63 L670.59,591.57 L676.39,610.51 L679.68,664.80 L685.23,586.52 L690.79,681.21 L697.86,626.92 L700.38,655.96 L702.40,577.68 L704.68,695.10 L706.70,601.67 L710.48,586.52 L713.01,610.51 L714.27,601.67 L716.04,683.74 L720.08,628.18 L725.13,606.72 L729.42,671.11 L731.95,619.34 L735.74,613.03 L738.26,613.03 L739.53,604.19 L743.31,681.21 L746.34,590.30 L749.63,586.52 L753.41,615.56 L756.44,647.12 L758.46,586.52 L760.99,609.24 L762.76,597.88 L765.54,647.12 L768.57,716.57 L773.62,590.30 L777.40,578.94 L780.69,605.45 L783.72,702.68 L786.75,619.34 L792.56,585.25 L795.84,706.46 L798.87,616.82 L801.39,600.40 L804.42,591.57 L806.44,688.79 L811.49,640.81 L816.55,582.73 L819.07,647.12 L820.59,585.25 L822.86,745.61 L825.38,601.67 L828.67,609.24 L831.19,677.42 L833.72,613.03 L835.48,692.58 L839.27,595.35 L842.30,600.40 L844.32,604.19 L848.36,692.58 L852.40,623.13 L854.42,618.08 L856.95,640.81 L858.97,609.24 L862.00,683.74 L865.79,596.62 L868.31,650.91 L870.84,600.40 L875.13,743.08 L877.66,658.48 L879.17,662.27 L881.44,635.76 L883.46,649.65 L885.48,599.14 L887.25,706.46 L891.55,610.51 L893.57,652.17 L895.33,640.81 L897.86,655.96 L899.88,628.18 L902.40,668.59 L906.19,705.20 L910.48,673.64 L912.51,673.64 L918.82,633.23 L922.61,640.81 L924.63,666.06 L927.15,634.49 L931.44,677.42 L933.97,639.55 L935.74,640.81 L937.76,655.96 L939.78,621.87 L943.31,659.75 L946.09,610.51 L949.12,624.39 L954.17,596.62 L956.70,722.88 L959.22,629.44 L962.51,599.14 L966.55,735.51 L968.57,611.77 L970.59,643.33 L975.64,592.83 L979.42,648.38 L981.19,631.97 L983.21,649.65 L985.23,628.18 L991.29,666.06 L993.31,645.86 L995.33,676.16 L998.36,616.82 L1000.89,606.72 L1002.91,645.86 L1007.96,600.40 L1009.73,655.96 L1014.78,676.16 L1016.55,649.65 L1018.57,711.52 L1021.09,649.65 L1023.11,648.38 L1029.17,606.72 L1033.72,663.54 L1036.24,620.61 L1040.03,631.97 L1042.56,635.76 L1045.33,748.13 L1048.36,640.81 L1050.13,633.23 L1051.90,638.28 L1055.94,605.45 L1059.73,645.86 L1062.76,716.57 L1064.02,668.59 L1066.55,668.59 L1070.33,604.19 L1072.35,714.04 L1075.38,657.22 L1076.65,659.75 L1077.91,667.32 L1080.43,666.06 L1083.72,686.26 L1085.48,719.09 L1091.80,634.49 L1093.82,653.43 L1097.35,619.34 L1100.64,655.96 L1103.92,847.88 L1108.21,666.06 L1110.74,701.41 L1112.00,703.94 L1114.53,643.33 L1117.56,732.98 L1122.61,643.33 L1124.63,647.12 L1126.65,666.06 L1128.92,650.91 L1130.94,663.54 L1135.23,610.51 L1139.27,755.71 L1141.55,708.99 L1143.06,738.03 L1149.37,662.27 L1151.65,778.43 L1155.43,734.24 L1158.21,624.39 L1161.24,643.33 L1164.27,719.09 L1166.29,644.60 L1170.59,671.11 L1172.61,691.31 L1174.63,657.22 L1178.92,724.14 L1180.94,630.71 L1183.46,725.40 L1185.74,638.28 L1187.25,638.28 L1189.27,618.08 L1191.55,748.13 L1193.31,676.16 L1195.33,708.99 L1199.88,615.56 L1204.17,682.47 L1205.94,683.74 L1208.72,705.20 L1212.51,707.73 L1216.29,645.86 L1218.57,715.30 L1220.59,611.77 L1222.61,674.90 L1228.67,618.08 L1233.72,741.82 L1237.00,606.72 L1239.53,607.98 L1242.05,595.35 L1243.31,597.88 L1247.10,727.93 L1250.38,706.46 L1255.43,652.17 L1259.73,740.56 L1263.01,653.43 L1266.55,647.12 L1269.07,669.85 L1272.35,708.99 L1274.88,671.11 L1276.65,669.85 L1280.69,616.82 L1285.74,672.37 L1287.51,643.33 L1290.03,668.59 L1295.84,621.87 L1298.36,661.01 L1301.39,645.86 L1303.92,691.31 L1307.71,628.18 L1312.25,614.29 L1314.53,863.03 L1318.57,643.33 L1320.33,650.91 L1322.61,623.13 L1324.63,804.95 L1326.65,601.67 L1328.67,703.94 L1331.19,645.86 L1334.22,635.76 L1336.75,648.38 L1341.29,706.46 L1347.35,630.71 L1351.39,727.93 L1353.92,645.86 L1355.69,798.64 L1358.97,691.31 L1362.00,663.54 L1364.02,662.27 L1366.55,770.86 L1368.31,693.84 L1370.33,791.06 L1372.61,668.59 L1376.39,647.12 L1378.41,691.31 L1380.18,669.85 L1385.23,739.29 L1387.25,715.30 L1389.02,717.83 L1391.55,864.29 L1393.57,679.95 L1395.33,683.74 L1399.37,614.29 L1403.67,755.71 L1405.43,714.04 L1407.45,744.34 L1409.98,685.00 L1415.03,638.28 L1418.82,580.20 L1420.59,581.46 L1422.61,822.63 L1424.63,731.72 L1426.39,732.98 L1431.44,631.97 L1432.71,634.49 L1436.49,865.56 L1439.78,669.85 L1441.55,711.52 L1443.31,666.06 L1447.35,741.82 L1450.89,703.94 L1454.17,633.23 L1455.94,634.49 L1457.96,735.51 L1460.48,661.01 L1464.27,783.48 L1466.80,638.28 L1468.06,647.12 L1470.59,616.82 L1472.35,745.61 L1474.37,662.27 L1476.39,813.79 L1481.95,613.03 L1484.98,798.64 L1487.51,705.20 L1491.29,775.91 L1495.33,639.55 L1499.63,754.44 L1505.94,620.61 L1509.73,647.12 L1512.25,727.93 L1514.53,681.21 L1516.55,856.72 L1524.88,595.35 L1526.65,600.40 L1528.67,768.33 L1530.69,762.02 L1533.21,625.66 L1534.98,624.39 L1537.51,601.67 L1543.31,726.67 L1545.84,663.54 L1547.86,717.83 L1551.90,654.70 L1555.94,634.49 L1558.97,671.11 L1562.76,631.97 L1564.53,640.81 L1568.57,630.71 L1570.33,649.65 L1572.10,650.91 L1574.63,677.42 L1578.67,639.55 L1580.69,659.75 L1582.96,625.66 L1584.22,629.44 L1586.75,606.72 L1589.27,621.87 L1592.30,610.51 L1595.59,703.94 L1597.35,663.54 L1599.37,715.30 L1603.41,602.93 L1606.95,708.99 L1612.07,658.48 L1616.36,604.19 L1620.91,625.66 L1626.46,676.16 L1634.55,631.97 L1636.57,652.17 L1639.60,619.34 L1641.62,620.61 L1643.64,635.76 L1645.40,623.13 L1647.93,629.44 L1651.72,605.45 L1655.51,688.79 L1659.80,663.54 L1663.84,616.82 L1667.63,669.85 L1670.66,618.08 L1673.94,648.38 L1679.49,667.32 L1678.0,562.5 Z" fill="#2db595"/>
    <rect x="293" y="257" width="211" height="607" fill="#302424" fill-opacity="0.3"/>
    <rect x="957" y="257" width="288" height="607" fill="#ffffff" fill-opacity="0.15"/>
    <rect x="957" y="253" width="288" height="4" fill="#ff9500"/>
    <rect x="1032" y="257" width="2" height="607" fill="#dedede"/>
    <circle cx="1101" cy="227.3" r="16.3" fill="#ff9a0a"/>
    <rect x="1091" y="224.7" width="20" height="5" fill="#111"/>
    <rect x="1098.7" y="217.3" width="4.6" height="20" fill="#111"/>
    <!-- sliders -->
    <rect x="236" y="946" width="446" height="48" rx="24" fill="#666"/>
    <rect x="236" y="946" width="152" height="48" rx="24" fill="#d8d8d8"/>
    <rect x="1112" y="946" width="390" height="48" rx="24" fill="#666"/>
    <rect x="1112" y="946" width="276" height="48" rx="24" fill="#d8d8d8"/>
    <circle cx="771" cy="965" r="45" fill="#d8d8d8"/>
    <circle cx="1019" cy="965" r="45" fill="#d8d8d8"/>
    <rect x="753.7" y="949.2" width="10.1" height="31.2" rx="2" fill="#1e1e1e"/>
    <path d="M768.6,964.8 L785.1,951.6 L785.1,978.0 Z" fill="#1e1e1e" stroke="#1e1e1e" stroke-width="3.2" stroke-linejoin="round"/>
    <path d="M1007.6,950.2 L1007.6,978.6 L1037.4,964.6 Z" fill="#1e1e1e" stroke="#1e1e1e" stroke-width="3.2" stroke-linejoin="round"/>
    <circle cx="360" cy="965.8" r="10" fill="none" stroke="#1e1e1e" stroke-width="4.1"/>
    <line x1="367.5" y1="973.3" x2="376" y2="982" stroke="#1e1e1e" stroke-width="5.4" stroke-linecap="round"/>
    <path d="M1349.2,975.8 A14.3,14.3 0 0 1 1368.0,958.4" fill="none" stroke="#1e1e1e" stroke-width="3.9"/>
    <path d="M1373.8,962.5 A14.3,14.3 0 0 1 1376.5,976.1" fill="none" stroke="#1e1e1e" stroke-width="3.9"/>
    <circle cx="1362.9" cy="971.2" r="3.9" fill="#1e1e1e"/>
    <path d="M1359.7,969.0 L1373.8,955.8 L1366.1,973.4 Z" fill="#1e1e1e"/>
    <circle cx="1595" cy="973" r="4.4" fill="#e0e0e0"/>
    <circle cx="1608" cy="973" r="4.4" fill="#e0e0e0"/>
    <circle cx="1621" cy="973" r="4.4" fill="#e0e0e0"/>
  </g>
</svg>
<div class="mono" style="left:839.5px;top:954px;font-size:36.2px;color:#8f8f8f;transform:scaleY(1.1)">00:27</div>
<div class="mono" style="left:857.5px;top:997.6px;font-size:24.2px;color:#8f8f8f;transform:scaleY(1.13)">02:26</div>
<div class="mono" style="left:426.8px;top:1020.6px;font-size:23.8px;color:#999;transform:scaleY(1.14)">3x</div>
<div class="mono" style="left:1275.6px;top:1021.5px;font-size:24.1px;color:#999;transform:scaleY(1.1)">100 %</div>
</body></html>
